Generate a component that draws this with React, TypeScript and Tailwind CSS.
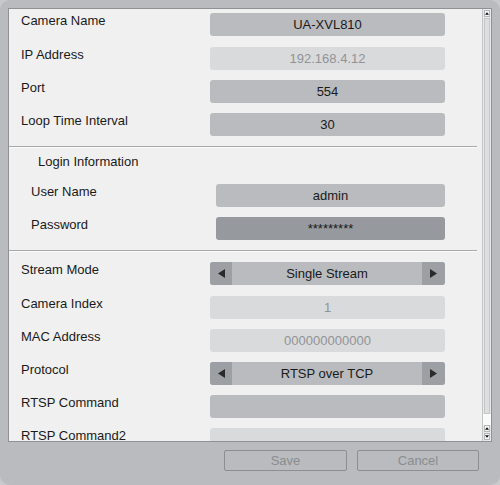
import React from "react";

const font = { fontFamily: '"Liberation Sans", Arial, sans-serif' };

function Label({ children, indent = false }: { children: React.ReactNode; indent?: boolean }) {
  return (
    <div className={`${indent ? "pl-[22px]" : "pl-[12px]"} text-[13px] leading-[16px] text-[#1a1a1a] flex-1 whitespace-nowrap`}>
      {children}
    </div>
  );
}

function Field({
  label,
  value,
  variant = "normal",
  indent = false,
  mt,
}: {
  label: string;
  value?: string;
  variant?: "normal" | "disabled" | "password";
  indent?: boolean;
  mt: string;
}) {
  const bg =
    variant === "disabled"
      ? "bg-[#d9dadc] text-[#919396]"
      : variant === "password"
      ? "bg-[#96999d] text-[#1a1a1a]"
      : "bg-[#b9bbbe] text-[#1a1a1a]";
  return (
    <div className={`flex items-start h-[23px] pr-[37px] ${mt}`}>
      <Label indent={indent}>{label}</Label>
      <div
        className={`${indent ? "w-[229px]" : "w-[235px]"} h-[23px] rounded-[3px] flex items-center justify-center text-[13px] ${bg}`}
      >
        {value}
      </div>
    </div>
  );
}

function Spinner({ label, value, mt }: { label: string; value: string; mt: string }) {
  return (
    <div className={`flex items-start h-[23px] pr-[37px] ${mt}`}>
      <Label>{label}</Label>
      <div className="w-[235px] h-[23px] rounded-[3px] flex items-stretch bg-[#b9bbbe] text-[#1a1a1a] overflow-hidden">
        <div className="w-[22px] bg-[#9c9fa3] flex items-center justify-center">
          <svg width="7" height="9" viewBox="0 0 7 9">
            <polygon points="7,0 7,9 0,4.5" fill="#2a2a2a" />
          </svg>
        </div>
        <div className="flex-1 flex items-center justify-center text-[13px]">{value}</div>
        <div className="w-[23px] bg-[#9c9fa3] flex items-center justify-center">
          <svg width="7" height="9" viewBox="0 0 7 9">
            <polygon points="0,0 0,9 7,4.5" fill="#2a2a2a" />
          </svg>
        </div>
      </div>
    </div>
  );
}

function Separator({ mt }: { mt: string }) {
  return (
    <div className={`${mt} mr-[5px] -ml-px`}>
      <div className="h-px bg-[#a6a8ab]" />
      <div className="h-px bg-[#fbfbfb]" />
    </div>
  );
}

function ScrollBtn({ up }: { up: boolean }) {
  return (
    <div className="h-[7px] mx-px bg-[#f4f4f4] border border-[#b5b7ba] flex items-center justify-center">
      <svg width="5" height="3" viewBox="0 0 5 3">
        {up ? <polygon points="0,3 5,3 2.5,0" fill="#111" /> : <polygon points="0,0 5,0 2.5,3" fill="#111" />}
      </svg>
    </div>
  );
}

export default function App() {
  return (
    <div className="w-[500px] h-[485px] bg-[#c7c9cb]" style={font}>
      <div className="w-[500px] h-[485px] bg-[#b9bbbe] rounded-[10px] pt-[8px] pl-[8px] flex flex-col">
        <div className="w-[484px] h-[434px] border border-[#8f9295] bg-[#f0f0f0] flex">
          <div className="flex-1 overflow-hidden">
            <div className="pt-[4px]">
              <Field label="Camera Name" value="UA-XVL810" mt="mt-0" />
              <Field label="IP Address" value="192.168.4.12" variant="disabled" mt="mt-[11px]" />
              <Field label="Port" value="554" mt="mt-[10px]" />
              <Field label="Loop Time Interval" value="30" mt="mt-[10px]" />
              <Separator mt="mt-[10px]" />
              <div className="pt-[6px] pl-[29px] text-[13px] leading-[16px] text-[#1a1a1a]">Login Information</div>
              <Field label="User Name" value="admin" indent mt="mt-[14px]" />
              <Field label="Password" value="*********" variant="password" indent mt="mt-[10px]" />
              <Separator mt="mt-[10px]" />
              <Spinner label="Stream Mode" value="Single Stream" mt="mt-[10px]" />
              <Field label="Camera Index" value="1" variant="disabled" mt="mt-[11px]" />
              <Field label="MAC Address" value="000000000000" variant="disabled" mt="mt-[10px]" />
              <Spinner label="Protocol" value="RTSP over TCP" mt="mt-[10px]" />
              <Field label="RTSP Command" value="" mt="mt-[10px]" />
              <Field label="RTSP Command2" value="" variant="disabled" mt="mt-[10px]" />
            </div>
          </div>
          <div className="w-[9px] border-l border-[#c2c4c6] bg-[#e8e9ea] flex flex-col py-px">
            <ScrollBtn up />
            <div className="mt-px mx-[1px] h-[396px] bg-[#dcdee0] border border-[#c4c6c8]" />
            <div className="flex-1 bg-[#fafafa]" />
            <ScrollBtn up />
            <div className="h-px" />
            <ScrollBtn up={false} />
          </div>
        </div>
        <div className="flex justify-end gap-[10px] pr-[21px] mt-[8px]">
          <button className="w-[123px] h-[21px] border border-[#8c8f92] rounded-[2px] text-[13px] text-[#8a8d90] flex items-center justify-center">
            Save
          </button>
          <button className="w-[122px] h-[21px] border border-[#8c8f92] rounded-[2px] text-[13px] text-[#8a8d90] flex items-center justify-center">
            Cancel
          </button>
        </div>
      </div>
    </div>
  );
}
